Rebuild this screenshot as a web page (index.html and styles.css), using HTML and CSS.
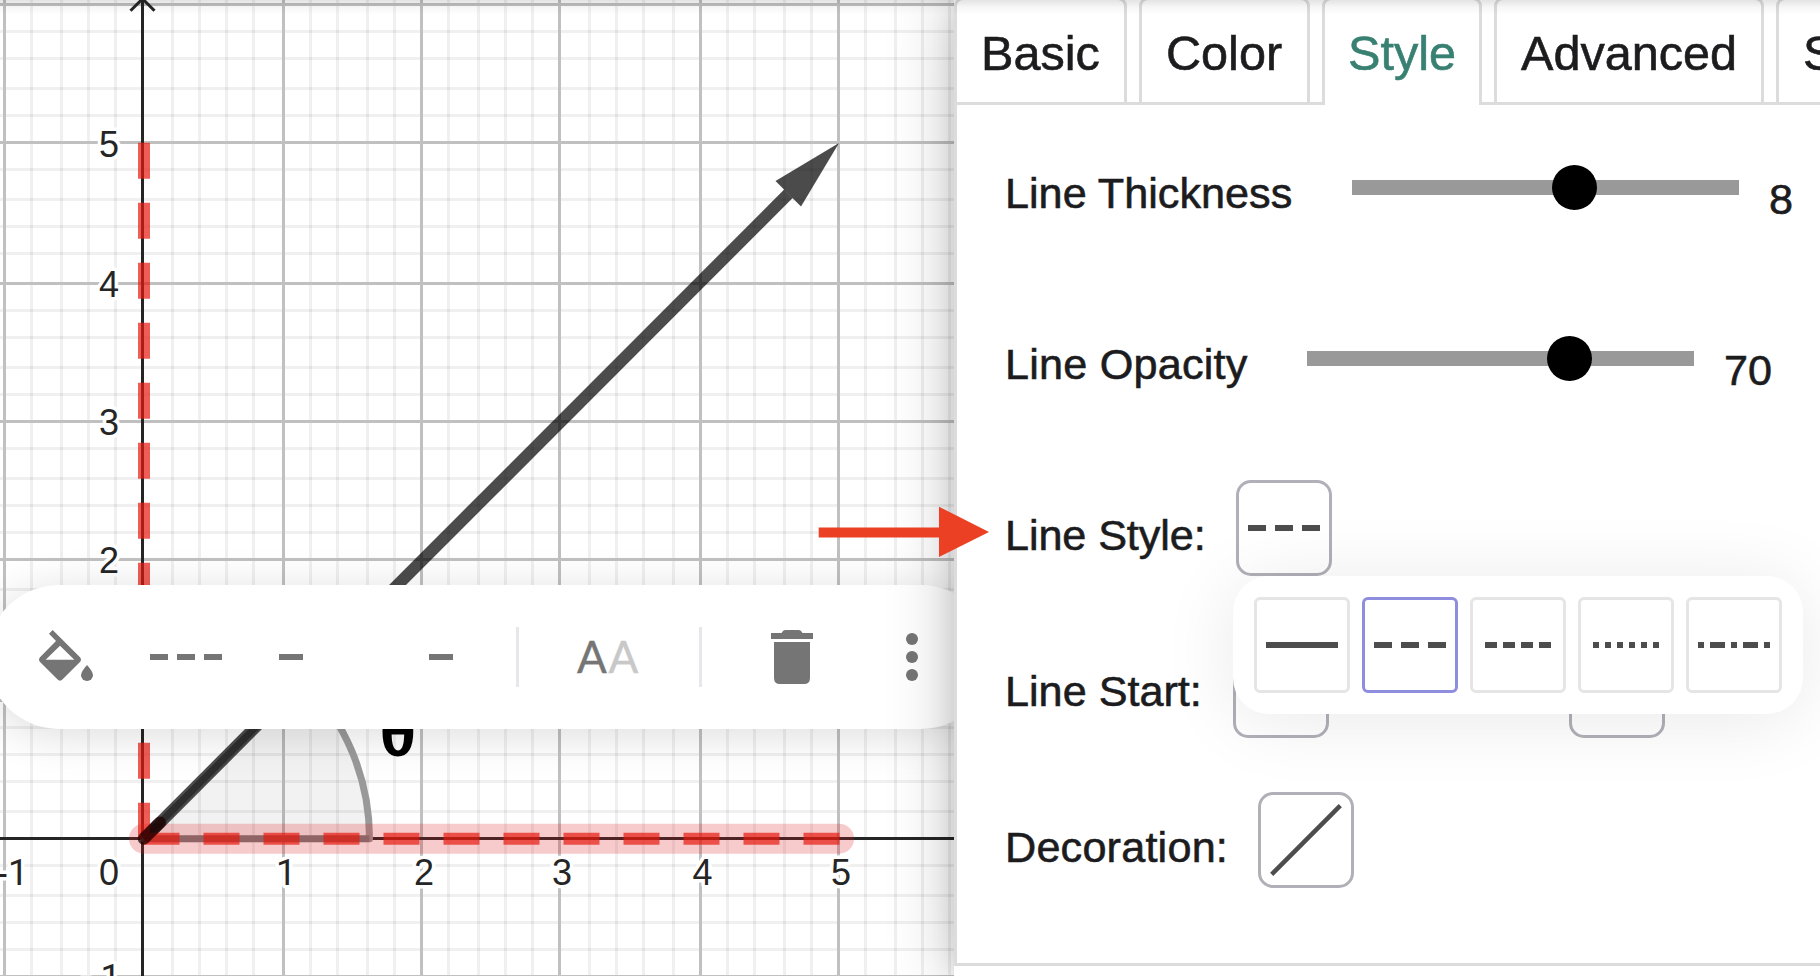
FILE: index.html
```html
<!DOCTYPE html>
<html lang="en">
<head>
<meta charset="utf-8">
<title>Line Style Settings</title>
<link rel="stylesheet" href="styles.css">
</head>
<body>
<div class="app">
  <main class="graphics">
    <svg class="plot" width="954" height="976" viewBox="0 0 954 976">
      <path class="minor" d="M31.5 0V976M61.5 0V976M88.5 0V976M115.5 0V976M172.5 0V976M199.5 0V976M226.5 0V976M253.5 0V976M310.5 0V976M337.5 0V976M367.5 0V976M394.5 0V976M448.5 0V976M478.5 0V976M505.5 0V976M532.5 0V976M589.5 0V976M616.5 0V976M643.5 0V976M673.5 0V976M727.5 0V976M754.5 0V976M784.5 0V976M811.5 0V976M865.5 0V976M895.5 0V976M922.5 0V976M949.5 0V976"/>
      <path class="minor" d="M0 31.5H954M0 58.5H954M0 88.5H954M0 115.5H954M0 169.5H954M0 199.5H954M0 226.5H954M0 253.5H954M0 310.5H954M0 337.5H954M0 367.5H954M0 394.5H954M0 448.5H954M0 478.5H954M0 505.5H954M0 532.5H954M0 589.5H954M0 616.5H954M0 643.5H954M0 673.5H954M0 727.5H954M0 754.5H954M0 781.5H954M0 811.5H954M0 865.5H954M0 895.5H954M0 922.5H954M0 949.5H954"/>
      <path class="major" d="M4.5 0V976M283.5 0V976M421.5 0V976M559.5 0V976M700.5 0V976M838.5 0V976M0 4.5H954M0 142.5H954M0 283.5H954M0 421.5H954M0 559.5H954M0 700.5H954M0 976.5H954"/>
      <path class="axis" d="M142.5 0V976M0 838.5H954M130.5 10.8L142.5 -1.2L154.5 10.8"/>
      <g class="tick">
        <text x="99" y="156.5">5</text>
        <text x="99" y="296.5">4</text>
        <text x="99" y="434.5">3</text>
        <text x="99" y="572.5">2</text>
        <text x="99" y="884.5">0</text>
        <text x="-4" y="884.5">-<tspan class="one">1</tspan></text>
        <text x="80" y="990">-</text>
        <text class="one" x="100.5" y="990">1</text>
        <text class="one" x="276" y="884.5">1</text>
        <text x="414" y="884.5">2</text>
        <text x="552" y="884.5">3</text>
        <text x="692.5" y="884.5">4</text>
        <text x="831" y="884.5">5</text>
      </g>
      <path class="angle" d="M144 838.7H369.5A225.5 225.5 0 0 0 303.5 679.2Z"/>
      <path class="angle-base" d="M144 838.7H369.5"/>
      <path class="halo" d="M144 838.7H839"/>
      <g class="vector">
        <path class="shaft" d="M144 838.7L788.4 193.8"/>
        <path class="head" d="M839 143L775.5 181L801 206.5Z"/>
        <path class="join" d="M784 189.3L792.7 198.3L800 190L790 184Z"/>
      </g>
      <path class="dashes" d="M144 142.7V838.7M143.5 838.7H839.5"/>
      <path class="origin" d="M143.700 838.700L160 822.400"/>
      <text class="theta" x="379.500" y="756">θ</text>
    </svg>
    <div class="toolbar">
      <svg class="bucket" width="60" height="60" viewBox="105 201 180 180">
        <path fill-rule="evenodd" d="M158 210L240 292Q246 299 240 306L188 358Q180 366 172 358L120 306Q114 299 120 292L168 243L147 221ZM180 257L137 299H223Z"/>
        <path d="M261 315Q279 335 279 346A18 17 0 0 1 243 346Q243 335 261 315Z"/>
      </svg>
      <div class="bar-dashes"><i></i><i></i><i></i></div>
      <div class="bar-dash first"></div>
      <div class="bar-dash second"></div>
      <div class="separator one-sep"></div>
      <div class="letters"><span>A</span><span class="pale">A</span></div>
      <div class="separator two-sep"></div>
      <svg class="trash" width="42" height="54" viewBox="0 0 42 54">
        <path d="M0 3H10.5Q12 0 14 0H28Q30 0 31.500 3H42V9H0ZM3 12H39V48Q39 54 33 54H9Q3 54 3 48Z"/>
      </svg>
      <div class="more"><i></i><i></i><i></i></div>
    </div>
  </main>

  <aside class="panel">
    <nav class="tabs">
      <div class="tab basic">Basic</div>
      <div class="tab color">Color</div>
      <div class="tab style active">Style</div>
      <div class="tab advanced">Advanced</div>
      <div class="tab scripting">Scripting</div>
    </nav>
    <section class="settings">
      <div class="row">
        <label class="thickness">Line Thickness</label>
        <div class="slider"><div class="knob at-8"></div></div>
        <output>8</output>
      </div>
      <div class="row">
        <label class="opacity">Line Opacity</label>
        <div class="slider"><div class="knob at-70"></div></div>
        <output>70</output>
      </div>
      <div class="row short">
        <label class="line-style">Line Style:</label>
        <div class="picker">
          <div class="box"><svg width="72" height="6"><path class="ink" d="M0 3H18M27 3H45M54 3H72"/></svg></div>
          <div class="popup">
            <div class="option"><svg width="72" height="6"><path class="ink" d="M0 3H72"/></svg></div>
            <div class="option selected"><svg width="72" height="6"><path class="ink" d="M0 3H18M27 3H45M54 3H72"/></svg></div>
            <div class="option"><svg width="72" height="6"><path class="ink" d="M3 3H15M21 3H33M39 3H51M57 3H69"/></svg></div>
            <div class="option"><svg width="72" height="6"><path class="ink" d="M3 3H9M15 3H21M27 3H33M39 3H45M51 3H57M63 3H69"/></svg></div>
            <div class="option"><svg width="72" height="6"><path class="ink" d="M0 3H6M12 3H27M33 3H39M45 3H60M66 3H72"/></svg></div>
          </div>
        </div>
      </div>
      <div class="row short">
        <label class="line-start">Line Start:</label>
        <div class="box low"></div>
        <div class="box low end"></div>
      </div>
      <div class="row short">
        <label class="decoration">Decoration:</label>
        <div class="box"><svg width="72" height="72"><path class="ink slash" d="M1.700 70.300L70.300 1.700"/></svg></div>
      </div>
    </section>
  </aside>

  <svg class="pointer" width="171" height="52" viewBox="0 0 171 52">
    <path d="M0.700 21.400H121V0.700L171 26L121 51V31.600H0.700Z"/>
  </svg>
  <div class="top-shade"></div>
</div>
</body>
</html>
```
FILE: styles.css
```css
* { box-sizing: border-box; }

body {
  margin: 0;
  background: #fff;
  color: #1c1c1e;
  font-family: "Liberation Sans", Arial, sans-serif;
}

.app {
  position: relative;
  display: flex;
  width: 1820px;
  height: 976px;
  overflow: hidden;
}

/* Graphics view */
.graphics {
  position: relative;
  flex: 0 0 954px;
  height: 976px;
  overflow: hidden;
}
.plot { display: block; }
.plot path { fill: none; }
.minor { stroke: rgba(0, 0, 0, .06); stroke-width: 3; }
.major { stroke: #c0c0c0; stroke-width: 3; }
.axis { stroke: #252525; stroke-width: 3; }
.tick text {
  font-size: 36px;
  fill: #252525;
  stroke: #fff;
  stroke-width: 7px;
  stroke-linejoin: round;
  paint-order: stroke;
}
.tick .one { font-family: Roboto, sans-serif; }
.halo { stroke: rgba(222, 30, 30, .23); stroke-width: 30; stroke-linecap: round; }
.plot .angle {
  fill: rgba(0, 0, 0, .05);
  stroke: #999;
  stroke-width: 7;
  stroke-linejoin: round;
}
.angle-base { stroke: rgba(0, 0, 0, .2); stroke-width: 7; }
.vector { opacity: .7; }
.plot .shaft { stroke: #000; stroke-width: 12; stroke-linecap: butt; }
.plot .head, .plot .join { fill: #000; }
.dashes { stroke: rgba(231, 25, 15, .7); stroke-width: 12; stroke-dasharray: 36 24; }
.origin { stroke: rgba(30, 0, 0, .75); stroke-width: 12; stroke-linecap: round; }
.theta { font-size: 68px; font-weight: 700; fill: #000; }

.toolbar {
  position: absolute;
  left: -13px;
  top: 585px;
  display: flex;
  align-items: center;
  width: 1006px;
  height: 144px;
  padding-left: 48px;
  border-radius: 72px;
  background: #fff;
  box-shadow: 0 6px 45px rgba(0, 0, 0, .14);
}
.toolbar svg { flex: none; fill: #757575; }
.toolbar i { display: block; background: #757575; }
.bar-dashes { display: flex; gap: 9px; margin-left: 55px; }
.bar-dashes i { width: 18px; height: 6px; }
.bar-dash { width: 24px; height: 6px; background: #757575; }
.bar-dash.first { margin-left: 57px; }
.bar-dash.second { margin-left: 126px; }
.separator { width: 3px; height: 60px; background: #e6e6eb; }
.one-sep { margin-left: 63px; }
.letters {
  display: flex;
  width: 66px;
  height: 62px;
  margin-left: 58px;
  font: 44px/60px Lato, sans-serif;
  color: #757575;
  -webkit-text-stroke: .4px;
}
.letters span { width: 31.500px; }
.letters .pale { color: #c8c8c8; }
.two-sep { margin-left: 56px; }
.trash { margin-left: 69px; }
.more { display: flex; flex-direction: column; gap: 6px; margin-left: 93px; }
.more i { width: 12px; height: 12px; border-radius: 50%; }

/* Properties panel */
.panel {
  position: relative;
  flex: 0 0 866px;
  height: 976px;
  background: #fff;
  box-shadow: 0 0 60px rgba(0, 0, 0, .26), 0 0 24px rgba(0, 0, 0, .08);
}
.tabs {
  display: flex;
  gap: 12px;
  width: 866px;
  height: 108px;
  margin-top: -3px;
  overflow: hidden;
  background: linear-gradient(#dcdcdc, #dcdcdc) 0 105px / 100% 3px no-repeat;
}
.tab {
  flex: none;
  height: 105px;
  padding: 26px 0 0 24px;
  border: 3px solid #dcdcdc;
  border-bottom: 0;
  border-radius: 9px 9px 0 0;
  background: #fff;
  font-size: 48.6px;
  line-height: 54px;
  white-space: nowrap;
  -webkit-text-stroke: .6px;
}
.tab.active { height: 108px; padding-left: 23px; color: #388072; }
.basic { width: 173px; }
.color { width: 171px; }
.style { width: 160px; }
.advanced { width: 270px; }
.scripting { width: 290px; }

.settings {
  height: 861px;
  padding: 9px 0 0 48px;
  border-left: 3px solid #dcdcdc;
  border-bottom: 3px solid #dcdcdc;
}
.row { display: flex; align-items: flex-start; height: 171px; }
.row.short { height: 156px; }
label, output {
  flex: none;
  font-size: 43.2px;
  line-height: 48px;
  white-space: nowrap;
  -webkit-text-stroke: .6px;
}
label { margin-top: 55px; }
output { margin: 61px 0 0 30px; }
.thickness { width: 347px; }
.opacity { width: 302px; letter-spacing: .2px; }
.line-style { width: 231px; letter-spacing: -.1px; }
.line-start { width: 228px; }
.decoration { width: 253px; letter-spacing: .2px; }

.slider {
  position: relative;
  width: 387px;
  height: 15px;
  margin-top: 66px;
  background: #999;
}
.knob {
  position: absolute;
  top: -15px;
  width: 45px;
  height: 45px;
  border-radius: 50%;
  background: #000;
}
.at-8 { left: 200px; }
.at-70 { left: 240px; }

.picker { position: relative; z-index: 1; margin-top: 24px; }
.box, .option {
  display: flex;
  align-items: center;
  justify-content: center;
  width: 96px;
  height: 96px;
  border: 3px solid #b1b0b8;
  border-radius: 15px;
}
.row > .box { margin-top: 24px; }
.row > .box.low { margin-top: 30px; }
.row > .end { margin-left: 240px; }
.ink { fill: none; stroke: #4d4d4d; stroke-width: 6; }
.slash { stroke-width: 4.5; }
.popup {
  position: absolute;
  left: -3px;
  top: 96px;
  display: flex;
  gap: 12px;
  padding: 21px;
  width: 570px;
  height: 138px;
  border-radius: 36px;
  background: #fff;
  box-shadow: 0 6px 75px rgba(0, 0, 0, .09);
}
.option { border-color: #e5e5e5; border-radius: 6px; }
.option.selected { border-color: #8f8ddd; }

.pointer { position: absolute; left: 818px; top: 506px; fill: #ec4024; }
.top-shade {
  position: absolute;
  left: 0;
  top: 0;
  width: 1820px;
  height: 15px;
  background: linear-gradient(rgba(0, 0, 0, .11), rgba(0, 0, 0, .03) 50%, transparent);
}
```
